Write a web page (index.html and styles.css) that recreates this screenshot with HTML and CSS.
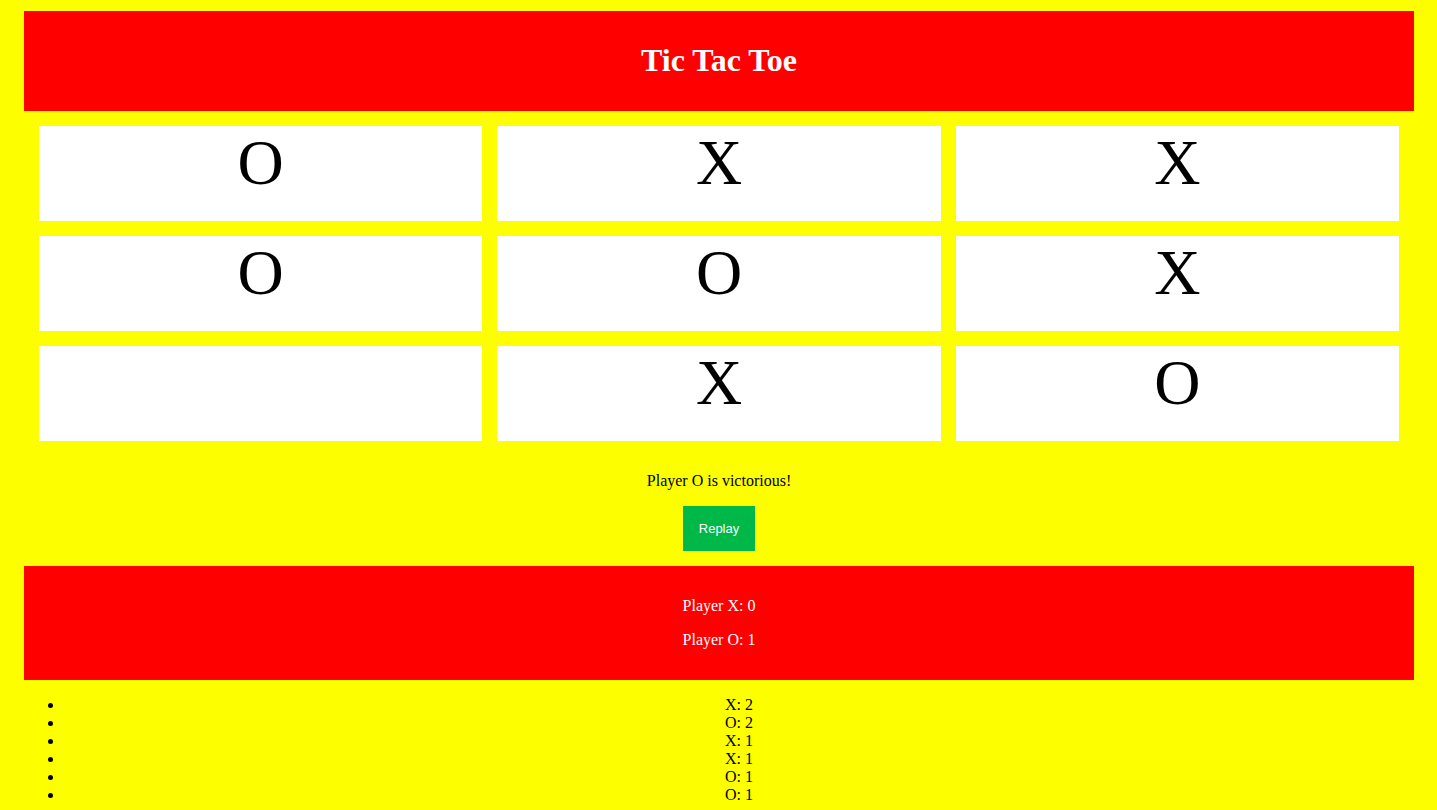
FILE: index.html
```html
<!DOCTYPE html>
<html lang="en">
<head>
<meta charset="utf-8">
<title>Tic Tac Toe</title>
<link rel="stylesheet" href="styles.css">
</head>
<body>
<main class="game">
  <header class="banner"><h1 class="title">Tic Tac Toe</h1></header>
  <section class="board">
    <div class="cell">O</div>
    <div class="cell">X</div>
    <div class="cell">X</div>
    <div class="cell">O</div>
    <div class="cell">O</div>
    <div class="cell">X</div>
    <div class="cell"></div>
    <div class="cell">X</div>
    <div class="cell">O</div>
  </section>
  <p class="status">Player O is victorious!</p>
  <button class="replay" type="button">Replay</button>
  <section class="score">
    <p class="player">Player X: 0</p>
    <p class="player">Player O: 1</p>
  </section>
  <ul class="history">
    <li>X: 2</li>
    <li>O: 2</li>
    <li>X: 1</li>
    <li>X: 1</li>
    <li>O: 1</li>
    <li>O: 1</li>
  </ul>
</main>
</body>
</html>
```
FILE: styles.css
```css
body {
  margin: 0;
  padding: 11px 23px 0 24px;
  background: #fdff00;
  color: #000;
  font-family: "Liberation Serif", "Times New Roman", serif;
  font-size: 16px;
  line-height: 18px;
  text-align: center;
}

.banner {
  padding: 31px 15px 33px;
  background: #f00;
  color: #fff;
}

.title {
  margin: 0;
  font-size: 32px;
  line-height: 36px;
}

.board {
  display: grid;
  grid-template-columns: repeat(3, 1fr);
  grid-auto-rows: minmax(95px, auto);
  gap: 15px;
  padding: 15px;
}

.cell {
  background: #fff;
  font-size: 64px;
  line-height: 74px;
}

.status {
  margin: 16px 0;
}

.replay {
  padding: 15px 16px;
  border: 0;
  background: #00b848;
  color: #fff;
  font-family: "Liberation Sans", Arial, sans-serif;
  font-size: 13px;
  line-height: 15px;
}

.score {
  display: flex;
  flex-direction: column;
  gap: 16px;
  margin-top: 15px;
  padding: 31px 15px;
  background: #f00;
  color: #fff;
}

.player {
  margin: 0;
}

.history {
  margin: 16px 0 0;
  padding-left: 40px;
}
```
